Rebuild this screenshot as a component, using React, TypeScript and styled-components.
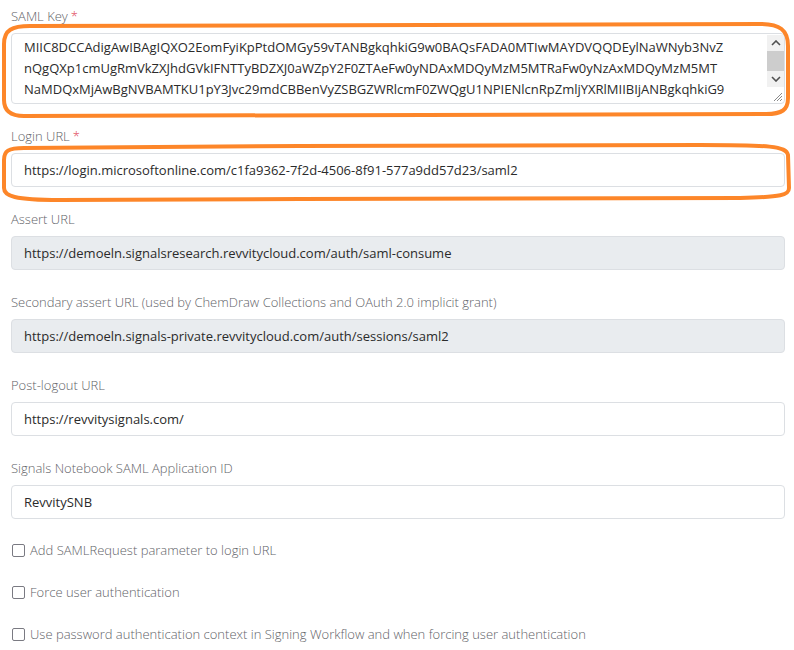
import React from "react";
import styled, { createGlobalStyle } from "styled-components";

const Global = createGlobalStyle`
  html, body { margin: 0; padding: 0; background: #fff; }
  body { font-family: "Open Sans", "Noto Sans", sans-serif; }
  * { box-sizing: border-box; }
`;

const Page = styled.div`
  position: relative;
  width: 794px;
  height: 650px;
  overflow: hidden;
  padding: 6px 9px 0 11px;
`;

const Group = styled.div`
  margin-bottom: 22px;
`;

const Label = styled.div`
  font-size: 13px;
  line-height: 20px;
  font-weight: 300;
  color: #5f6368;
  margin-bottom: 7px;
  white-space: nowrap;
`;

const Req = styled.span`
  color: #e0465a;
  margin-left: 3px;
`;

const Field = styled.div<{ $disabled?: boolean }>`
  height: 34px;
  border: 1px solid #dcdfe3;
  border-radius: 4px;
  background: ${(p) => (p.$disabled ? "#e9ecef" : "#fff")};
  padding: 0 12px;
  display: flex;
  align-items: center;
  font-size: 13px;
  color: #2b2b2b;
  white-space: nowrap;
`;

const AreaBox = styled.div`
  height: 71px;
  border: 1px solid #dcdfe3;
  border-radius: 4px;
  background: #fff;
  display: flex;
  overflow: hidden;
`;

const AreaText = styled.div`
  flex: 1;
  padding: 3px 0 3px 12px;
  font-size: 13px;
  line-height: 21px;
  color: #2b2b2b;
  white-space: nowrap;
  overflow: hidden;
`;

const ScrollCol = styled.div`
  width: 17px;
  display: flex;
  flex-direction: column;
  padding-top: 1px;
`;

const ScrollTrack = styled.div`
  width: 17px;
  height: 52px;
  background: #f1f1f1;
  display: flex;
  flex-direction: column;
`;

const Arrow = styled.div`
  height: 16px;
  display: flex;
  align-items: center;
  justify-content: center;
`;

const Thumb = styled.div`
  flex: 1;
  background: #cdcdcd;
`;

const Grip = styled.div`
  flex: 1;
  display: flex;
  align-items: flex-end;
  justify-content: flex-end;
  padding: 0 1px 1px 0;
`;

const CheckRow = styled.label`
  display: flex;
  align-items: center;
  height: 18px;
  margin-bottom: 24px;
  padding-left: 1px;
  font-size: 13px;
  font-weight: 300;
  color: #5f6368;
  white-space: nowrap;
`;

const Box = styled.span`
  width: 13px;
  height: 13px;
  border: 1px solid #7a7a82;
  border-radius: 2px;
  margin-right: 5px;
  flex: none;
`;

const Overlay = styled.svg`
  position: absolute;
  left: 0;
  top: 0;
  pointer-events: none;
`;

const keyLines = [
  "MIIC8DCCAdigAwIBAgIQXO2EomFyiKpPtdOMGy59vTANBgkqhkiG9w0BAQsFADA0MTIwMAYDVQQDEylNaWNyb3NvZ",
  "nQgQXp1cmUgRmVkZXJhdGVkIFNTTyBDZXJ0aWZpY2F0ZTAeFw0yNDAxMDQyMzM5MTRaFw0yNzAxMDQyMzM5MT",
  "NaMDQxMjAwBgNVBAMTKU1pY3Jvc29mdCBBenVyZSBGZWRlcmF0ZWQgU1NPIENlcnRpZmljYXRlMIIBIjANBgkqhkiG9",
];

const fields = [
  { label: "Assert URL", value: "https://demoeln.signalsresearch.revvitycloud.com/auth/saml-consume", disabled: true },
  {
    label: "Secondary assert URL (used by ChemDraw Collections and OAuth 2.0 implicit grant)",
    value: "https://demoeln.signals-private.revvitycloud.com/auth/sessions/saml2",
    disabled: true,
  },
  { label: "Post-logout URL", value: "https://revvitysignals.com/", disabled: false },
  { label: "Signals Notebook SAML Application ID", value: "RevvitySNB", disabled: false },
];

const checks = [
  "Add SAMLRequest parameter to login URL",
  "Force user authentication",
  "Use password authentication context in Signing Workflow and when forcing user authentication",
];

export default function App() {
  return (
    <>
      <Global />
      <Page>
        <Group>
          <Label>
            SAML Key<Req>*</Req>
          </Label>
          <AreaBox>
            <AreaText>
              {keyLines.map((l) => (
                <div key={l}>{l}</div>
              ))}
            </AreaText>
            <ScrollCol>
              <ScrollTrack>
                <Arrow>
                  <svg width="10" height="6" viewBox="0 0 10 6">
                    <path d="M1 5 L5 1 L9 5" fill="none" stroke="#505050" strokeWidth="1.6" />
                  </svg>
                </Arrow>
                <Thumb />
                <Arrow>
                  <svg width="10" height="6" viewBox="0 0 10 6">
                    <path d="M1 1 L5 5 L9 1" fill="none" stroke="#505050" strokeWidth="1.6" />
                  </svg>
                </Arrow>
              </ScrollTrack>
              <Grip>
                <svg width="12" height="12" viewBox="0 0 12 12">
                  <path d="M11 3 L3 11 M11 6 L6 11 M11 9 L9 11" stroke="#8a8a8a" strokeWidth="1" />
                </svg>
              </Grip>
            </ScrollCol>
          </AreaBox>
        </Group>
        <Group>
          <Label>
            Login URL<Req>*</Req>
          </Label>
          <Field>https://login.microsoftonline.com/c1fa9362-7f2d-4506-8f91-577a9dd57d23/saml2</Field>
        </Group>
        {fields.map((f) => (
          <Group key={f.label}>
            <Label>{f.label}</Label>
            <Field $disabled={f.disabled}>{f.value}</Field>
          </Group>
        ))}
        {checks.map((c) => (
          <CheckRow key={c}>
            <Box />
            {c}
          </CheckRow>
        ))}
        <Overlay width="794" height="650" viewBox="0 0 794 650">
          <path
            d="M4 44 C4 30 12 26 30 26 L760 24 C780 24 788 30 788 46 L788 98 C788 110 782 114 766 114 L24 116 C10 116 4 110 4 100 Z"
            fill="none"
            stroke="#fd8629"
            strokeWidth="4"
          />
          <path
            d="M4 160 C4 151 8 148 24 148 L300 146 L700 145 C770 145 786 146 788 155 L789 188 C789 195 782 197 740 198 L300 199 L60 200 C14 200 4 196 4 188 Z"
            fill="none"
            stroke="#fd8629"
            strokeWidth="4"
          />
        </Overlay>
      </Page>
    </>
  );
}
